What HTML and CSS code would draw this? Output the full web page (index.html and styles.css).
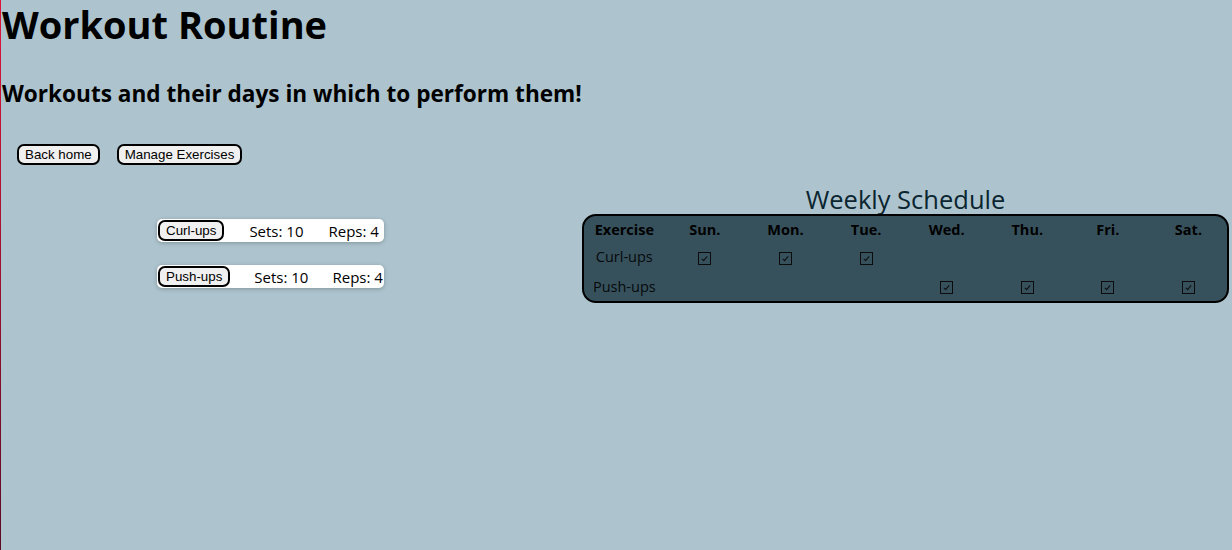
FILE: index.html
```html
<!DOCTYPE html>
<html lang="en">
<head>
<meta charset="utf-8">
<title>Workout Routine</title>
<link rel="stylesheet" href="styles.css">
</head>
<body>
<h1 class="title">Workout Routine</h1>
<h2 class="subtitle">Workouts and their days in which to perform them!</h2>
<nav class="nav">
  <button class="btn">Back home</button>
  <button class="btn">Manage Exercises</button>
</nav>
<main class="content">
  <section class="list">
    <div class="card card-a">
      <button class="btn btn-ex">Curl-ups</button>
      <span class="stat">Sets: 10</span>
      <span class="stat">Reps: 4</span>
    </div>
    <div class="card card-b">
      <button class="btn btn-ex">Push-ups</button>
      <span class="stat">Sets: 10</span>
      <span class="stat">Reps: 4</span>
    </div>
  </section>
  <section class="schedule">
    <h3 class="sched-title">Weekly Schedule</h3>
    <div class="table">
      <div class="row head">
        <div class="cell">Exercise</div><div class="cell">Sun.</div><div class="cell">Mon.</div><div class="cell">Tue.</div><div class="cell">Wed.</div><div class="cell">Thu.</div><div class="cell">Fri.</div><div class="cell">Sat.</div>
      </div>
      <div class="row r1">
        <div class="cell name">Curl-ups</div>
        <div class="cell"><span class="chk"></span></div>
        <div class="cell"><span class="chk"></span></div>
        <div class="cell"><span class="chk"></span></div>
        <div class="cell"></div><div class="cell"></div><div class="cell"></div><div class="cell"></div>
      </div>
      <div class="row r2">
        <div class="cell name">Push-ups</div>
        <div class="cell"></div><div class="cell"></div><div class="cell"></div>
        <div class="cell"><span class="chk"></span></div>
        <div class="cell"><span class="chk"></span></div>
        <div class="cell"><span class="chk"></span></div>
        <div class="cell"><span class="chk"></span></div>
      </div>
    </div>
  </section>
</main>
</body>
</html>
```
FILE: styles.css
```css
html, body {
  margin: 0;
  padding: 0;
}
body {
  width: 1232px;
  height: 550px;
  overflow: hidden;
  background: linear-gradient(to bottom, #e0153c, #5a0a22) no-repeat 0 0 / 1px 100%, #adc4ce;
  font-family: "Open Sans", "Noto Sans", sans-serif;
  color: #000;
}
.title {
  margin: 0;
  padding-left: 2px;
  font-size: 38px;
  line-height: 48px;
  font-weight: 700;
}
.subtitle {
  margin: 31px 0 0 0;
  padding-left: 2px;
  font-size: 22.6px;
  line-height: 30px;
  font-weight: 700;
}
.nav {
  display: flex;
  gap: 17px;
  margin: 35px 0 0 17px;
}
.btn {
  font-family: "Liberation Sans", Arial, sans-serif;
  font-size: 13.33px;
  line-height: 15px;
  padding: 1px 6px;
  border: 2px solid #000;
  border-radius: 7px;
  background: #f0f0f0;
  color: #000;
}
.content {
  display: grid;
  grid-template-columns: 582px 647px;
  margin-top: 20px;
}
.list {
  display: flex;
  flex-direction: column;
  align-items: flex-start;
  gap: 23px;
  padding: 34px 0 0 157px;
}
.card {
  display: flex;
  align-items: center;
  background: #fff;
  border-radius: 5px;
  box-shadow: 0 1px 4px rgba(0,0,0,0.25);
  padding: 1px 5px 1px 1px;
  font-size: 15px;
  line-height: 18px;
}
.card .stat { margin-left: 25px; }
.card-b { padding-right: 1px; }
.card-b .stat { margin-left: 24px; }
.btn-ex {
  padding: 1px 6px;
}
.schedule {
  display: flex;
  flex-direction: column;
}
.sched-title {
  margin: 0;
  text-align: center;
  font-size: 25.5px;
  line-height: 29px;
  font-weight: 400;
  color: #0a2530;
}
.table {
  border: 2px solid #000;
  border-radius: 14px;
  background: #37515c;
  padding: 0;
  box-sizing: border-box;
  height: 89px;
}
.row {
  display: grid;
  grid-template-columns: repeat(8, 80.6px);
  align-items: center;
}
.cell {
  text-align: center;
  font-size: 14.5px;
}
.head { height: 27px; font-weight: 700; }
.r1 { height: 27px; }
.r2 { height: 32px; }
.name { color: #05090b; }
.chk {
  display: inline-block;
  width: 11px;
  height: 11px;
  border: 1px solid #0c0c0c;
  vertical-align: middle;
  position: relative;
}
.chk::after {
  content: "";
  position: absolute;
  left: 4px;
  top: 2px;
  width: 2px;
  height: 5px;
  border: solid #0c0c0c;
  border-width: 0 1.5px 1.5px 0;
  transform: rotate(40deg);
}
```
